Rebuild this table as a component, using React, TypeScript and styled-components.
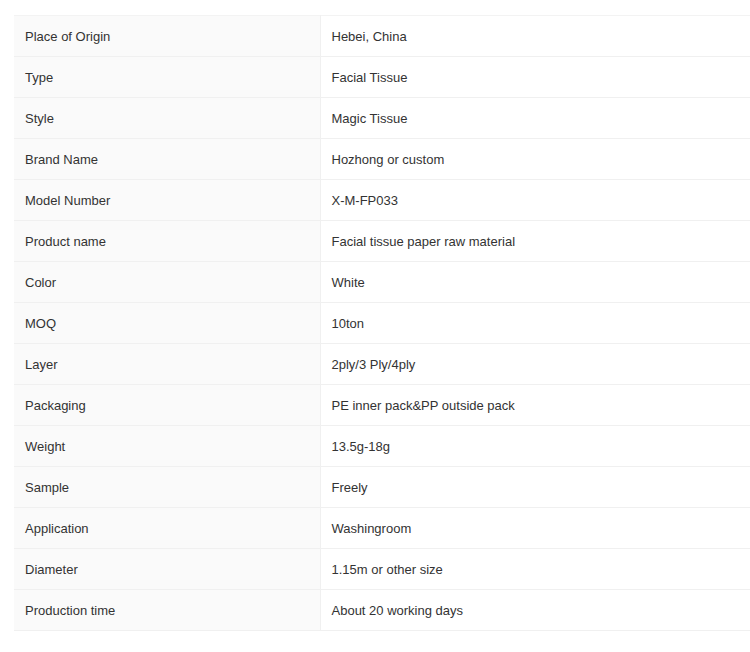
import React from "react";
import styled, { createGlobalStyle } from "styled-components";

const rows: [string, string][] = [
  ["Place of Origin", "Hebei, China"],
  ["Type", "Facial Tissue"],
  ["Style", "Magic Tissue"],
  ["Brand Name", "Hozhong or custom"],
  ["Model Number", "X-M-FP033"],
  ["Product name", "Facial tissue paper raw material"],
  ["Color", "White"],
  ["MOQ", "10ton"],
  ["Layer", "2ply/3 Ply/4ply"],
  ["Packaging", "PE inner pack&PP outside pack"],
  ["Weight", "13.5g-18g"],
  ["Sample", "Freely"],
  ["Application", "Washingroom"],
  ["Diameter", "1.15m or other size"],
  ["Production time", "About 20 working days"],
];

const App: React.FC = () => {
  return (
    <Page>
      <GlobalStyle />
      <Table>
        <tbody>
          {rows.map(([name, value]) => (
            <tr key={name}>
              <Cell label>{name}</Cell>
              <Cell>{value}</Cell>
            </tr>
          ))}
        </tbody>
      </Table>
    </Page>
  );
};

export default App;

const GlobalStyle = createGlobalStyle`
  body {
    margin: 0;
    background: #fff;
    overflow: hidden;
    font-family: "Liberation Sans", Arial, sans-serif;
  }
`;

const Page = styled.div`
  padding: 15px 0 0 14px;
  width: 750px;
  height: 652px;
  box-sizing: border-box;
  overflow: hidden;
`;

const Table = styled.table`
  width: 760px;
  border-collapse: collapse;
  table-layout: fixed;
  border-top: 1px solid #f3f3f3;
`;

const Cell = styled.td<{ label?: boolean }>`
  width: ${(p) => (p.label ? "306px" : "auto")};
  height: 41px;
  padding: 1px 0 0 11px;
  box-sizing: border-box;
  font-size: 13px;
  color: #333;
  background: ${(p) => (p.label ? "#fafafa" : "#fff")};
  border-bottom: 1px solid #f0f0f0;
  border-right: ${(p) => (p.label ? "1px solid #f0f0f0" : "none")};
  vertical-align: middle;
`;
